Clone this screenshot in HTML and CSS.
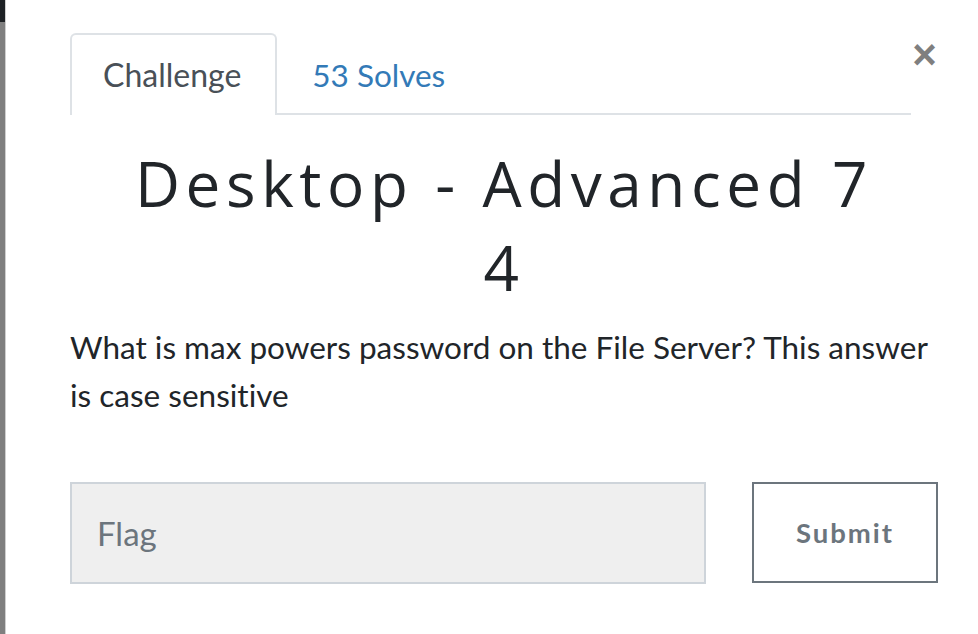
FILE: index.html
```html
<!DOCTYPE html>
<html>
<head>
<meta charset="utf-8">
<link rel="stylesheet" href="styles.css">
</head>
<body>
<div class="page">
  <div class="edge">
    <div class="edge-top"></div>
    <div class="edge-rest"></div>
  </div>
  <div class="modal">
    <div class="modal-head">
      <ul class="tabs">
        <li class="tab active">Challenge</li>
        <li class="tab link">53 Solves</li>
      </ul>
      <button class="close" type="button">&times;</button>
    </div>
    <h3 class="title">Desktop - Advanced 7 4</h3>
    <p class="question">What is max powers password on the File Server? This answer is case sensitive</p>
    <form class="flag-form">
      <input class="flag-input" type="text" placeholder="Flag">
      <button class="submit" type="button">Submit</button>
    </form>
  </div>
</div>
</body>
</html>
```

FILE: styles.css
```css
html, body {
  margin: 0;
  padding: 0;
  background: #ffffff;
}
.page {
  display: flex;
  width: 978px;
  height: 634px;
  overflow: hidden;
}
.edge {
  width: 5px;
  display: flex;
  flex-direction: column;
  flex: none;
}
.edge-top {
  height: 22px;
  background: #1d2124;
}
.edge-rest {
  flex: 1;
  background: #7f7f7f;
}
.modal {
  flex: 1;
  border-left: 1px solid #cfcfcf;
  padding: 33px 41px 0 64px;
  font-family: Lato, "Open Sans", sans-serif;
  font-variant-ligatures: none;
}
.modal-head {
  display: flex;
  align-items: flex-start;
}
.tabs {
  flex: 1;
  display: flex;
  list-style: none;
  margin: 0;
  padding: 0;
  border-bottom: 2px solid #dee2e6;
}
.tab {
  font-size: 32px;
  line-height: 34px;
  padding: 23px 34px 21px 31px;
  border: 2px solid transparent;
  border-bottom: 0;
  border-radius: 6px 6px 0 0;
  margin-bottom: -2px;
}
.tab.active {
  color: #495057;
  border-color: #dee2e6;
  background: #fff;
  padding-bottom: 23px;
}
.tab.link {
  color: #337ab7;
  padding-left: 33px;
  font-size: 31.5px;
}
.close {
  flex: none;
  width: 27px;
  margin-top: 2px;
  padding: 0;
  border: 0;
  background: none;
  color: #7f7f7f;
  font-family: "Liberation Sans", Arial, sans-serif;
  font-weight: 700;
  font-size: 42px;
  line-height: 40px;
  text-align: center;
}
.title {
  max-width: 760px;
  margin: 26px auto 0;
  text-align: center;
  font-family: "Open Sans", sans-serif;
  font-weight: 400;
  font-size: 62px;
  line-height: 84px;
  letter-spacing: 5.6px;
  color: #212529;
}
.question {
  margin: 14px 0 0;
  font-size: 31.5px;
  line-height: 48px;
  color: #212529;
}
.flag-form {
  display: flex;
  align-items: flex-start;
  gap: 46px;
  margin-top: 63px;
}
.flag-input {
  box-sizing: border-box;
  width: 636px;
  height: 102px;
  border: 2px solid #ced4da;
  background: #efefef;
  padding: 0 25px;
  font-family: Lato, sans-serif;
  font-size: 33px;
  color: #495057;
  outline: none;
}
.flag-input::placeholder {
  color: #6c757d;
}
.submit {
  box-sizing: border-box;
  width: 186px;
  height: 101px;
  border: 2px solid #6c757d;
  background: #fff;
  color: #6c757d;
  font-family: Lato, sans-serif;
  font-weight: 700;
  font-size: 27.5px;
  letter-spacing: 2px;
}
```
